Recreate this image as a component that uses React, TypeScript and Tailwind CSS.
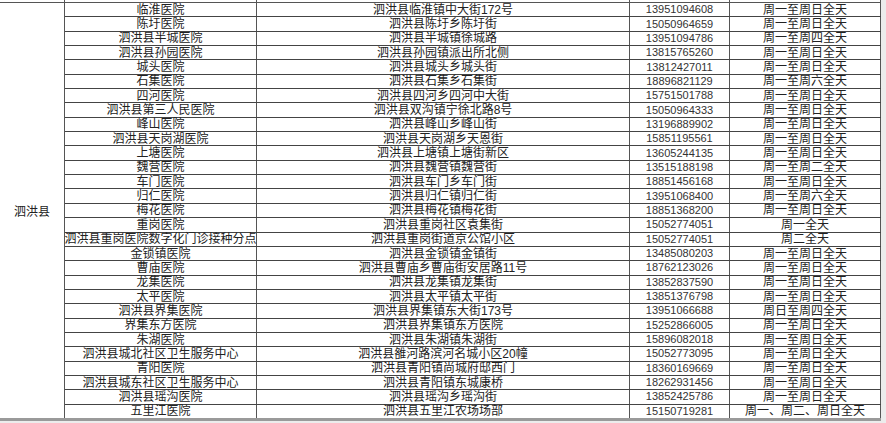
const rows: [string, string, string, string][] = [
  ['临淮医院', '泗洪县临淮镇中大街172号', '13951094608', '周一至周日全天'],
  ['陈圩医院', '泗洪县陈圩乡陈圩街', '15050964659', '周一至周日全天'],
  ['泗洪县半城医院', '泗洪县半城镇徐城路', '13951094786', '周一至周四全天'],
  ['泗洪县孙园医院', '泗洪县孙园镇派出所北侧', '13815765260', '周一至周日全天'],
  ['城头医院', '泗洪县城头乡城头街', '13812427011', '周一至周日全天'],
  ['石集医院', '泗洪县石集乡石集街', '18896821129', '周一至周六全天'],
  ['四河医院', '泗洪县四河乡四河中大街', '15751501788', '周一至周日全天'],
  ['泗洪县第三人民医院', '泗洪县双沟镇宁徐北路8号', '15050964333', '周一至周日全天'],
  ['峰山医院', '泗洪县峰山乡峰山街', '13196889902', '周一至周日全天'],
  ['泗洪县天岗湖医院', '泗洪县天岗湖乡天恩街', '15851195561', '周一至周日全天'],
  ['上塘医院', '泗洪县上塘镇上塘街新区', '13605244135', '周一至周日全天'],
  ['魏营医院', '泗洪县魏营镇魏营街', '13515188198', '周一至周二全天'],
  ['车门医院', '泗洪县车门乡车门街', '18851456168', '周一至周日全天'],
  ['归仁医院', '泗洪县归仁镇归仁街', '13951068400', '周一至周六全天'],
  ['梅花医院', '泗洪县梅花镇梅花街', '18851368200', '周一至周日全天'],
  ['重岗医院', '泗洪县重岗社区袁集街', '15052774051', '周一全天'],
  ['泗洪县重岗医院数字化门诊接种分点', '泗洪县重岗街道京公馆小区', '15052774051', '周二全天'],
  ['金锁镇医院', '泗洪县金锁镇金镇街', '13485080203', '周一至周日全天'],
  ['曹庙医院', '泗洪县曹庙乡曹庙街安居路11号', '18762123026', '周一至周日全天'],
  ['龙集医院', '泗洪县龙集镇龙集街', '13852837590', '周一至周日全天'],
  ['太平医院', '泗洪县太平镇太平街', '13851376798', '周一至周日全天'],
  ['泗洪县界集医院', '泗洪县界集镇东大街173号', '13951066688', '周日至周四全天'],
  ['界集东方医院', '泗洪县界集镇东方医院', '15252866005', '周一至周日全天'],
  ['朱湖医院', '泗洪县朱湖镇朱湖街', '15896082018', '周一至周日全天'],
  ['泗洪县城北社区卫生服务中心', '泗洪县雒河路滨河名城小区20幢', '15052773095', '周一至周日全天'],
  ['青阳医院', '泗洪县青阳镇尚城府邸西门', '18360169669', '周一至周日全天'],
  ['泗洪县城东社区卫生服务中心', '泗洪县青阳镇东城康桥', '18262931456', '周一至周日全天'],
  ['泗洪县瑶沟医院', '泗洪县瑶沟乡瑶沟街', '13852425786', '周一至周日全天'],
  ['五里江医院', '泗洪县五里江农场场部', '15150719281', '周一、周二、周日全天'],
];

const cell = 'flex items-center justify-center whitespace-nowrap border-r border-[#555]';

export default function App() {
  return (
    <div
      className="w-[886px] h-[423px] overflow-hidden bg-[#ececec] text-[12px] leading-none text-[#222]"
      style={{ fontFamily: '"Liberation Sans", "Noto Sans CJK SC", sans-serif' }}
    >
      <div className="w-[881px] bg-white">
        {/* cut-off row above */}
        <div className="flex h-[2px]">
          <div className="w-[65px] border-r border-[#555]" />
          <div className="w-[192px] border-r border-[#555]" />
          <div className="w-[373px] border-r border-[#555]" />
          <div className="w-[100px] border-r border-[#555]" />
          <div className="w-[151px] border-r border-[#555]" />
        </div>

        <div className="flex h-[416px] border-t border-[#555]">
          <div className="w-[65px] border-r border-[#555] flex items-center justify-center pt-[2px]">
            泗洪县
          </div>
          <div className="flex flex-1 flex-col">
            {rows.map(([name, addr, phone, hours], i) => (
              <div
                key={i}
                className={`flex flex-1 ${i < rows.length - 1 ? 'border-b border-[#444]' : ''}`}
              >
                <div className={`${cell} w-[192px]`}>{name}</div>
                <div className={`${cell} w-[373px]`}>{addr}</div>
                <div className={`${cell} w-[100px] text-[11px] text-[#333]`}>{phone}</div>
                <div className={`${cell} w-[151px]`}>{hours}</div>
              </div>
            ))}
          </div>
        </div>
        <div className="h-[3px] bg-[#9a9a9a]" />
      </div>
    </div>
  );
}
